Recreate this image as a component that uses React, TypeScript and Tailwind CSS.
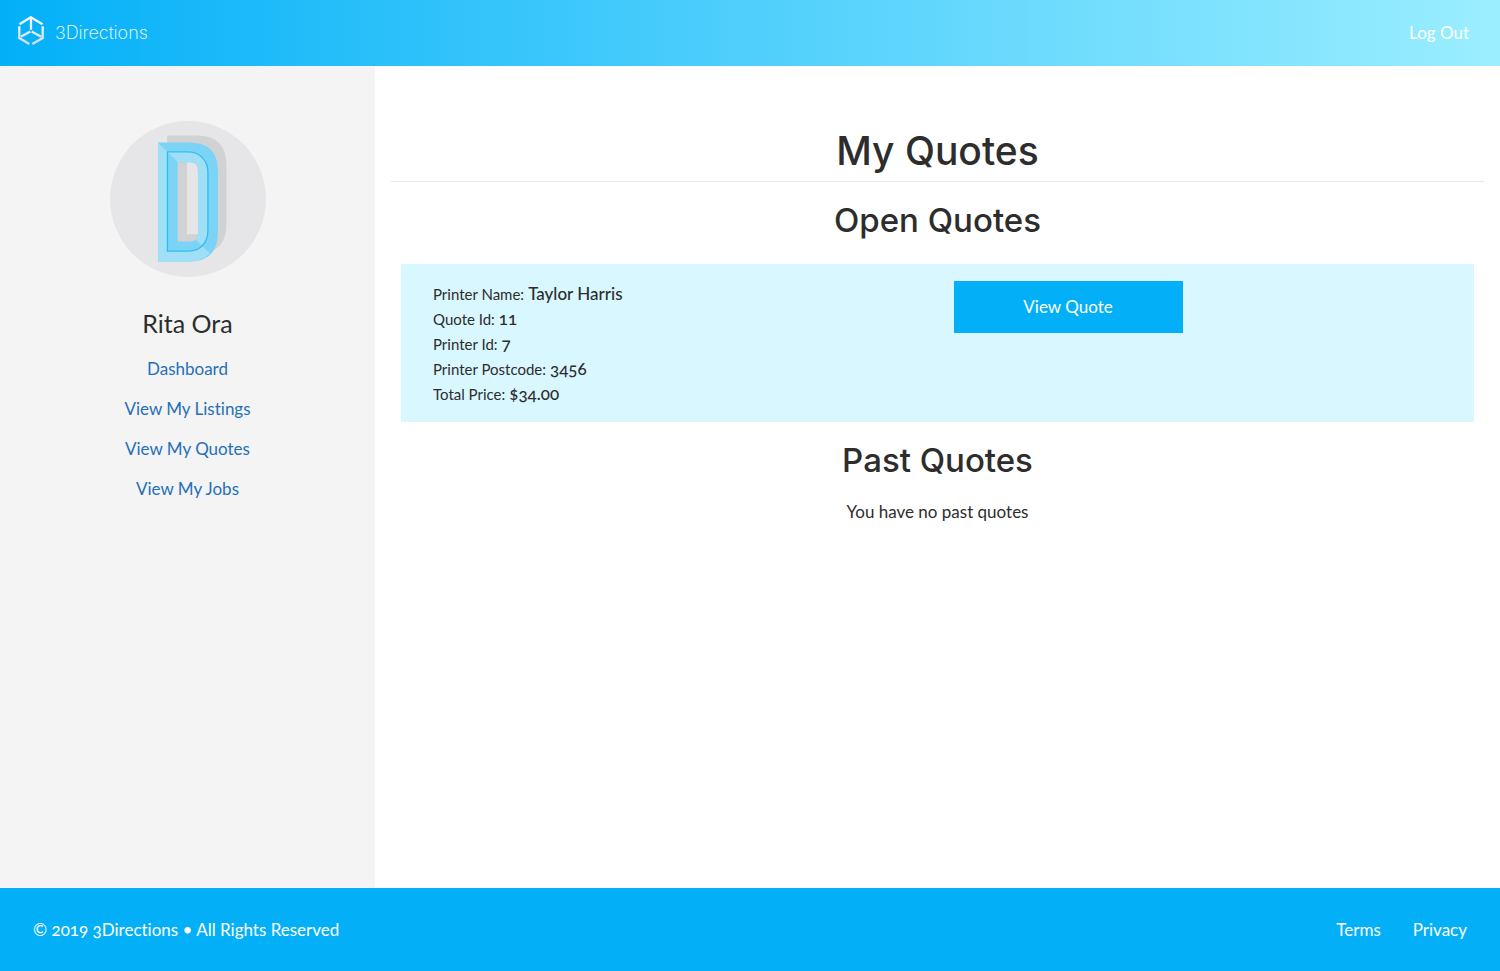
import React from "react";

const navLinks = ["Dashboard", "View My Listings", "View My Quotes", "View My Jobs"];

const quoteFields = [
  { label: "Printer Name:", value: "Taylor Harris" },
  { label: "Quote Id:", value: "11" },
  { label: "Printer Id:", value: "7" },
  { label: "Printer Postcode:", value: "3456" },
  { label: "Total Price:", value: "$34.00" },
];

function LogoMark() {
  return (
    <svg viewBox="54 48 78 88" className="h-[29px] w-[26px]" fill="none" strokeWidth="7" aria-hidden="true">
      <defs>
        <linearGradient id="logo-shade" gradientUnits="userSpaceOnUse" x1="92" y1="48" x2="92" y2="136">
          <stop offset="0" stopColor="#ffffff" />
          <stop offset="1" stopColor="#cfdbe4" />
        </linearGradient>
      </defs>
      <g stroke="url(#logo-shade)">
        <path d="M58 73 L92.500 52 L128 73" />
        <path d="M93 52 V90" />
        <path d="M57.500 79 V115 L88 133" />
        <path d="M128.500 79 V115 L97 133" />
        <path d="M62 111 L91 95" />
        <path d="M124 111 L95 95" />
      </g>
    </svg>
  );
}

function Avatar() {
  return (
    <svg viewBox="29 31 470 470" className="size-[156px]" role="img" aria-label="Rita Ora">
      <circle cx="264" cy="266" r="235" fill="#e6e6e8" />
      <path fillRule="evenodd" fill="#d1d2d4" d="M201 75 H290 Q380 75 380 165 V340 Q380 432 290 432 H201 Z M261 135 V372 H294 V135 Z" />
      <path fill="#d1d2d4" d="M233 155 H261 V372 H294 V394 H233 Z" />
      <path fill="#e6e6e8" d="M261 155 H294 V372 H261 Z" />
      <path fillRule="evenodd" fill="#7bd3f5" d="M174 96 H268 Q354 96 354 182 V368 Q354 454 268 454 H174 Z M233 155 V394 H270 Q294 394 294 370 V180 Q294 155 270 155 Z" />
      <path fill="#a1dff6" d="M174 96 L202 124 V423 H262 Q288 423 305 407 L330 430 Q304 454 268 454 H174 Z" />
      <path fill="#a1dff6" d="M202 124 H262 Q324 124 324 182 V368 Q324 390 308 408 L286 387 Q294 380 294 370 V180 Q294 155 270 155 H233 Z" />
      <path fill="none" stroke="#2bc0f2" strokeWidth="4" d="M202 124 H262 C300 124 324 148 324 186 V362 C324 400 300 423 262 423 H202 Z" />
    </svg>
  );
}

export default function App() {
  return (
    <div className="flex min-h-screen flex-col bg-white font-[Lato,sans-serif] text-[17px] text-[#2d2d2d] [font-variant-ligatures:none] [font-variant-numeric:oldstyle-nums]">
      <header className="flex h-[66px] items-center justify-between bg-linear-to-r/srgb from-[#03b0f8] to-[#9beeff] pr-[31px] pl-[18px] text-white">
        <a href="#" className="flex items-start gap-[11px]">
          <LogoMark />
          <span className="font-[Inter,sans-serif] text-[18px] leading-[34px] font-extralight">3Directions</span>
        </a>
        <a href="#">Log Out</a>
      </header>

      <div className="flex flex-1">
        <aside className="flex w-1/4 flex-col items-center bg-[#f4f4f4] pt-[55px]">
          <Avatar />
          <h2 className="mt-7 text-[25px] leading-9">Rita Ora</h2>
          <nav className="mt-2 flex flex-col items-center text-[#2470b8]">
            {navLinks.map((link) => (
              <a key={link} href="#" className="leading-10">
                {link}
              </a>
            ))}
          </nav>
        </aside>

        <main className="flex-1 px-4 pt-[60px] text-center">
          <h1 className="border-b border-[#e8e8e8] pb-[5px] font-[Inter,sans-serif] text-[39px] leading-[50px] font-medium">
            My Quotes
          </h1>
          <h2 className="mt-4 font-[Inter,sans-serif] text-[33px] leading-[44px] font-medium">Open Quotes</h2>

          <section className="mx-[10px] mt-[22px] grid grid-cols-2 bg-[#d9f7ff] px-4 pt-[17px] pb-4 text-left">
            <dl className="px-4">
              {quoteFields.map(({ label, value }) => (
                <div key={label} className="flex h-[25px] items-baseline gap-1 leading-[25px]">
                  <dt className="text-[15px]">{label}</dt>
                  <dd className="font-medium">{value}</dd>
                </div>
              ))}
            </dl>
            <div className="px-4">
              <button type="button" className="h-[52px] w-[229px] bg-[#03b0f8] text-white">
                View Quote
              </button>
            </div>
          </section>

          <h2 className="mt-4 font-[Inter,sans-serif] text-[33px] leading-[44px] font-medium">Past Quotes</h2>
          <p className="mt-[10px] leading-10">You have no past quotes</p>
        </main>
      </div>

      <footer className="flex h-[83px] items-center justify-between bg-[#03b0f8] px-[33px] text-white">
        <p>© 2019 3Directions • All Rights Reserved</p>
        <nav className="flex gap-8">
          <a href="#">Terms</a>
          <a href="#">Privacy</a>
        </nav>
      </footer>
    </div>
  );
}
